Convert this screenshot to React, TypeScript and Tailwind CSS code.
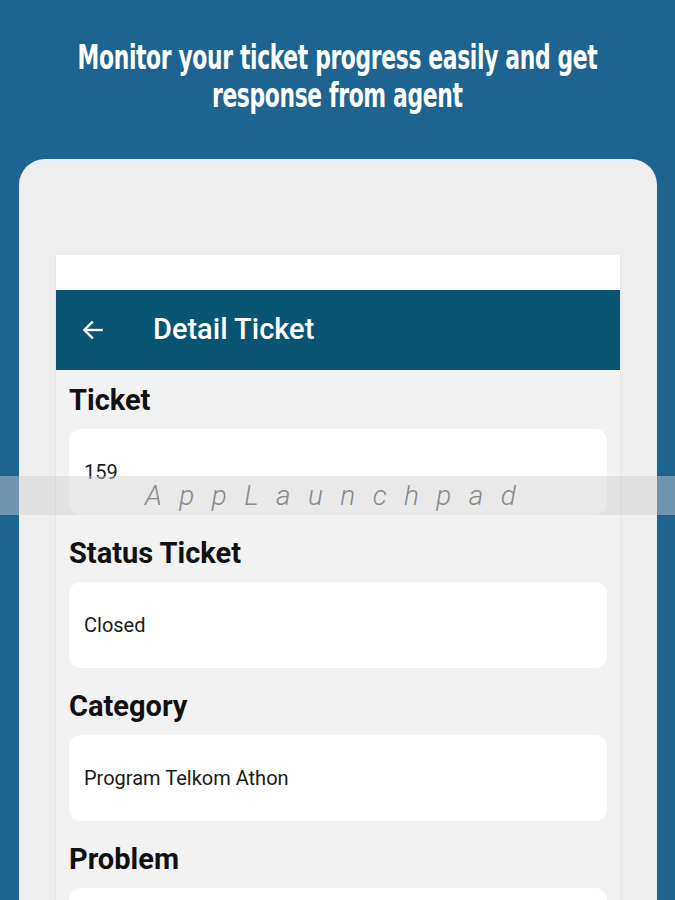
import React from "react";

function Field({ label, value }: { label: string; value?: string }) {
  return (
    <div className="flex flex-col">
      <div className="h-[60px] flex items-center text-[29px] font-bold text-[#111] leading-none pt-[2px]">{label}</div>
      <div className="h-[86px] rounded-[12px] bg-white flex items-center px-[15px] text-[20px] text-[#1a1a1a]">
        {value}
      </div>
    </div>
  );
}

export default function App() {
  return (
    <div className="relative w-[675px] h-[900px] overflow-hidden bg-[#1d6590] font-['Roboto',sans-serif]">
      <div className="pt-[38px] flex flex-col items-center text-white font-['DejaVu_Sans_Condensed','DejaVu_Sans',sans-serif] font-bold text-[34px] leading-[38px] tracking-[-0.5px]">
        <div className="w-max scale-x-[0.715] whitespace-nowrap">Monitor your ticket progress easily and get</div>
        <div className="w-max scale-x-[0.715] whitespace-nowrap">response from agent</div>
      </div>
      <div className="ml-[19px] w-[638px] mt-[45px] h-[800px] rounded-t-[26px] bg-[#eeeeee] px-[36px] pt-[96px]">
        <div className="h-full bg-[#f2f2f2] border-x border-[#e4e4e4]">
          <div className="h-[35px] bg-white" />
          <div className="h-[80px] bg-[#0a5473] flex items-center text-white">
            <svg className="ml-[24px]" width="26" height="26" viewBox="0 0 24 24" fill="none" stroke="white" strokeWidth="2.2" strokeLinecap="square">
              <path d="M20 12H5" />
              <path d="M11 5l-7 7 7 7" />
            </svg>
            <span className="ml-[47px] text-[29px] font-medium">Detail Ticket</span>
          </div>
          <div className="px-[13px] flex flex-col gap-[7px] -mt-[1px]">
            <Field label="Ticket" value="159" />
            <Field label="Status Ticket" value="Closed" />
            <Field label="Category" value="Program Telkom Athon" />
            <Field label="Problem" />
          </div>
        </div>
      </div>
      <div className="absolute left-0 right-0 top-[476px] h-[39px] bg-[rgba(206,206,206,0.46)] flex items-center pl-[145px]">
        <span className="italic font-light text-[28px] tracking-[17.4px] text-[#8a8a8a]">AppLaunchpad</span>
      </div>
    </div>
  );
}
